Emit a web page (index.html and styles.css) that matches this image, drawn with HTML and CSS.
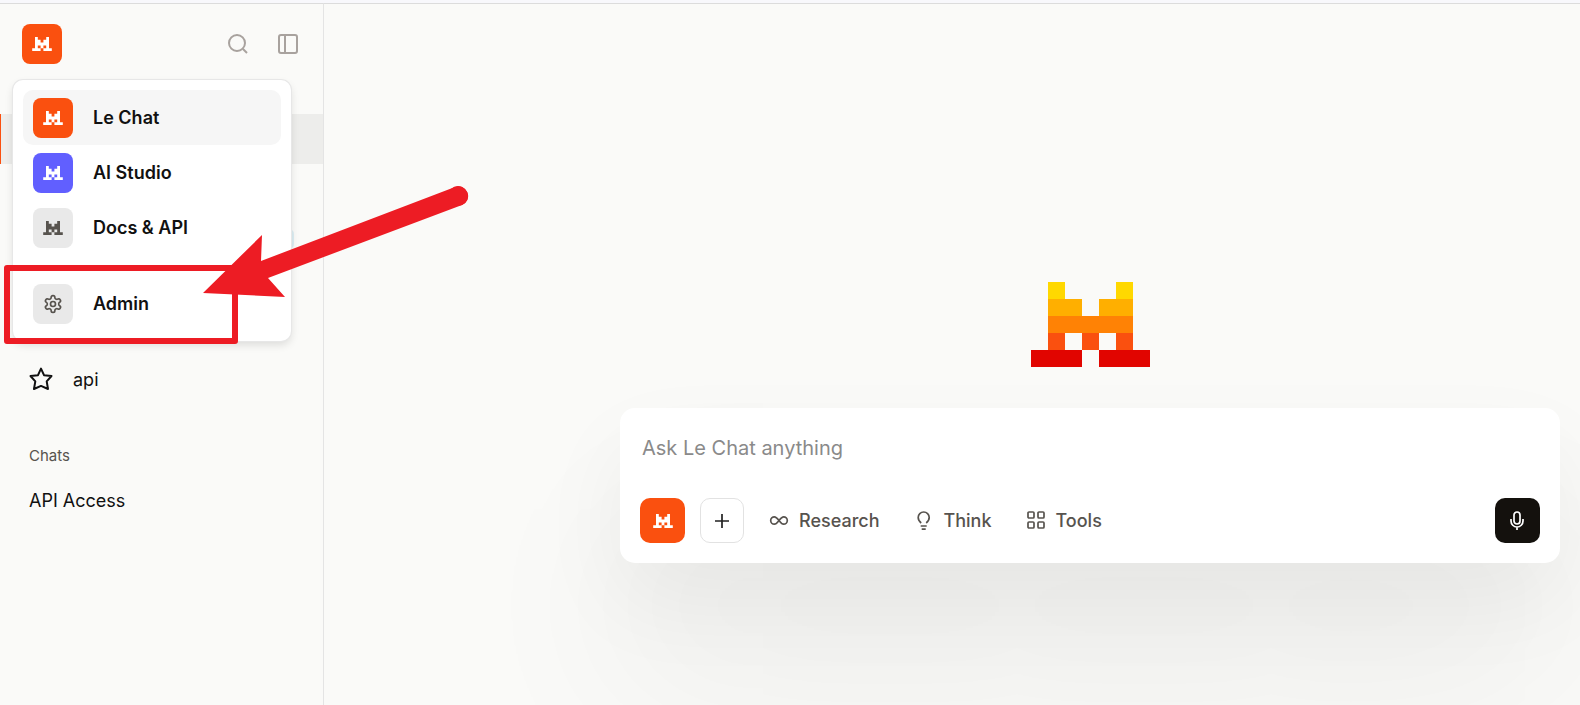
FILE: index.html
```html
<!DOCTYPE html>
<html lang="en">
<head>
  <meta charset="utf-8">
  <title>Le Chat</title>
  <link rel="stylesheet" href="styles.css">
</head>
<body>
  <!-- shared logo shape -->
  <svg class="defs" aria-hidden="true">
    <symbol id="mark" viewBox="0 0 7 5">
      <path d="M1 0h1v1h1v1h1V1h1V0h1v4h1v1H4V4H3v1H0V4h1zM2 3v1h1V3zM4 3v1h1V3z"/>
    </symbol>
  </svg>

  <div class="app">
    <aside class="sidebar">
      <header class="sidebar-top">
        <button class="tile orange" aria-label="Switch app"><svg class="mark"><use href="#mark"/></svg></button>
        <div class="top-actions">
          <button class="icon-btn" aria-label="Search">
            <svg width="20" height="20" viewBox="0 0 20 20"><circle cx="9" cy="9" r="8"/><path d="M15 15l4 4"/></svg>
          </button>
          <button class="icon-btn" aria-label="Toggle sidebar">
            <svg width="20" height="20" viewBox="0 0 20 20"><rect x="1" y="1" width="18" height="18" rx="2"/><path d="M7 1v18"/></svg>
          </button>
        </div>

        <nav class="menu" aria-label="Apps">
          <a class="menu-item active" href="#"><span class="tile orange"><svg class="mark"><use href="#mark"/></svg></span>Le Chat</a>
          <a class="menu-item" href="#"><span class="tile purple"><svg class="mark"><use href="#mark"/></svg></span>AI Studio</a>
          <a class="menu-item" href="#"><span class="tile grey"><svg class="mark"><use href="#mark"/></svg></span>Docs &amp; API</a>
          <a class="menu-item admin" href="#">
            <span class="tile grey">
              <svg class="gear" width="20" height="20" viewBox="0 0 24 24"><path d="M12.22 2h-.44a2 2 0 0 0-2 2v.18a2 2 0 0 1-1 1.73l-.43.25a2 2 0 0 1-2 0l-.15-.08a2 2 0 0 0-2.73.73l-.22.38a2 2 0 0 0 .73 2.73l.15.1a2 2 0 0 1 1 1.72v.51a2 2 0 0 1-1 1.74l-.15.09a2 2 0 0 0-.73 2.73l.22.38a2 2 0 0 0 2.73.73l.15-.08a2 2 0 0 1 2 0l.43.25a2 2 0 0 1 1 1.73V20a2 2 0 0 0 2 2h.44a2 2 0 0 0 2-2v-.18a2 2 0 0 1 1-1.73l.43-.25a2 2 0 0 1 2 0l.15.08a2 2 0 0 0 2.73-.73l.22-.39a2 2 0 0 0-.73-2.73l-.15-.08a2 2 0 0 1-1-1.74v-.5a2 2 0 0 1 1-1.74l.15-.09a2 2 0 0 0 .73-2.73l-.22-.38a2 2 0 0 0-2.73-.73l-.15.08a2 2 0 0 1-2 0l-.43-.25a2 2 0 0 1-1-1.73V4a2 2 0 0 0-2-2z"/><circle cx="12" cy="12" r="3"/></svg>
            </span>Admin
          </a>
        </nav>
      </header>

      <div class="row selected"></div>
      <div class="row badge-row"><span class="badge"></span></div>

      <a class="row starred" href="#">
        <svg width="24" height="24" viewBox="0 0 24 24"><path d="M12 1.600l3 6.600 7.500.8-4.800 5.300 1.300 7.700-7-3.100-7 3.100 1.300-7.700L1.500 9l7.500-.8z"/></svg>
        api
      </a>
      <h2 class="group-title">Chats</h2>
      <a class="row" href="#">API Access</a>
    </aside>

    <main class="main">
      <svg class="logo" width="119" height="85" viewBox="0 0 7 5" shape-rendering="crispEdges">
        <path fill="#ffd800" d="M1 0h1v1H1zM5 0h1v1H5z"/>
        <path fill="#ffaf00" d="M1 1h2v1H1zM4 1h2v1H4z"/>
        <path fill="#ff8205" d="M1 2h5v1H1z"/>
        <path fill="#fa500f" d="M1 3h1v1H1zM3 3h1v1H3zM5 3h1v1H5z"/>
        <path fill="#e10500" d="M0 4h3v1H0zM4 4h3v1H4z"/>
      </svg>

      <form class="composer">
        <input class="prompt" type="text" placeholder="Ask Le Chat anything" aria-label="Ask Le Chat anything">
        <div class="tools">
          <button type="button" class="square orange" aria-label="Agents"><svg class="mark"><use href="#mark"/></svg></button>
          <button type="button" class="square outline" aria-label="Add">
            <svg width="20" height="20" viewBox="0 0 20 20"><path d="M10 3v14M3 10h14"/></svg>
          </button>
          <button type="button" class="tool">
            <svg width="20" height="20" viewBox="0 0 20 20"><path d="M10 9.500C8.300 7.300 7.300 5.800 5.400 5.800a3.700 3.700 0 0 0 0 7.400c1.900 0 2.900-1.500 4.600-3.700s2.700-3.700 4.600-3.700a3.700 3.700 0 0 1 0 7.400c-1.900 0-2.900-1.500-4.600-3.700z"/></svg>
            Research
          </button>
          <button type="button" class="tool">
            <svg width="20" height="20" viewBox="0 0 20 20"><path d="M7.200 12C5.500 10.700 4.200 9.200 4.200 6.500a5.500 5.500 0 0 1 11 0c0 2.700-1.300 4.200-3 5.500M6.700 15h6M7.700 18.200h4"/></svg>
            Think
          </button>
          <button type="button" class="tool">
            <svg width="20" height="20" viewBox="0 0 20 20"><rect x="2" y="1" width="6" height="6" rx="1"/><rect x="12" y="1" width="6" height="6" rx="1"/><rect x="2" y="11" width="6" height="6" rx="1"/><rect x="12" y="11" width="6" height="6" rx="1"/></svg>
            Tools
          </button>
          <button type="button" class="square mic" aria-label="Voice input">
            <svg width="20" height="20" viewBox="0 0 20 20"><rect x="6" y="1" width="6" height="12" rx="3"/><path d="M3 8v2a6 6 0 0 0 12 0V8M9 16v3"/></svg>
          </button>
        </div>
      </form>
    </main>
  </div>

  <!-- annotation over the page -->
  <svg class="annotation" width="480" height="360" viewBox="0 0 480 360" aria-hidden="true">
    <rect x="7" y="268" width="228" height="73" fill="none" stroke="#ed1c24" stroke-width="6" stroke-linejoin="round"/>
    <path fill="#ed1c24" d="M203 293l59-58-1 26 194-74a9 9 0 0 1 7 18l-194 73 17 19z"/>
    <circle cx="458" cy="196" r="10" fill="#ed1c24"/>
  </svg>
</body>
</html>
```

FILE: styles.css
```css
* {
  box-sizing: border-box;
}

body {
  margin: 0;
  font-family: Inter, "Liberation Sans", sans-serif;
  font-size: 18px;
  color: #111;
  background: #fafaf8;
}

a {
  color: inherit;
  text-decoration: none;
}

button {
  padding: 0;
  border: none;
  background: none;
  font: inherit;
  cursor: pointer;
}

svg {
  display: block;
  flex: none;
}

.defs {
  position: absolute;
  width: 0;
  height: 0;
}

.app {
  display: flex;
  min-height: 100vh;
  border-top: 3px solid #f8f8fc;
  overflow: hidden;
}

/* sidebar */
.sidebar {
  width: 324px;
  flex: none;
  border-top: 1px solid #dcdcdc;
  border-right: 1px solid #e4e4e4;
}

.sidebar-top {
  position: relative;
  display: flex;
  align-items: center;
  justify-content: space-between;
  padding: 20px 25px 0 22px;
}

.top-actions {
  display: flex;
  gap: 30px;
}

.icon-btn svg {
  fill: none;
  stroke: #a8a29e;
  stroke-width: 2;
}

.tile {
  display: flex;
  align-items: center;
  justify-content: center;
  width: 40px;
  height: 40px;
  border-radius: 8px;
  color: #fff;
}

.mark {
  width: 20px;
  height: 14px;
  fill: currentColor;
}

.orange {
  background: #fa500f;
  color: #fff;
}

.purple {
  background: #615fff;
}

.grey {
  background: #e9e9e9;
  color: #57534e;
}

.gear {
  fill: none;
  stroke: currentColor;
  stroke-width: 2;
}

/* app switcher */
.menu {
  position: absolute;
  top: 76px;
  left: 13px;
  z-index: 1;
  width: 278px;
  padding: 10px;
  background: #fff;
  border-radius: 10px;
  box-shadow: 0 0 0 1px #e7e7e7, 0 4px 8px rgba(0, 0, 0, 0.12);
}

.menu-item {
  display: flex;
  align-items: center;
  gap: 20px;
  height: 55px;
  padding: 0 10px;
  border-radius: 10px;
  font-weight: 600;
}

.menu-item.active {
  background: #f6f6f6;
}

.menu-item.admin {
  margin-top: 21px;
}

/* sidebar rows */
.row {
  display: flex;
  align-items: center;
  height: 50px;
  padding: 0 29px;
}

.selected {
  margin-top: 50px;
  background: #ededeb;
  border-left: 1px solid #fa500f;
}

.badge-row {
  justify-content: flex-end;
  margin-top: 50px;
}

.badge {
  width: 40px;
  height: 20px;
  border-radius: 5px;
  background: #dceef3;
}

.starred {
  gap: 20px;
  margin-top: 90px;
}

.starred svg {
  fill: none;
  stroke: currentColor;
  stroke-width: 2;
  stroke-linejoin: round;
}

.group-title {
  margin: 42px 29px 9px;
  font-size: 15px;
  font-weight: 400;
  line-height: 20px;
  color: #57534e;
}

/* main area */
.main {
  flex: 1;
  display: flex;
  flex-direction: column;
  align-items: center;
  padding: 278px 20px 0 296px;
  border-top: 1px solid #dcdcdc;
}

.composer {
  width: 100%;
  margin-top: 41px;
  padding: 20px;
  background: #fff;
  border-radius: 15px;
  box-shadow: 0 40px 90px rgba(0, 0, 0, 0.05), 0 120px 180px rgba(0, 0, 0, 0.06);
}

.prompt {
  display: block;
  width: 100%;
  height: 40px;
  margin-bottom: 30px;
  padding: 0 2px;
  border: none;
  outline: none;
  background: none;
  font: inherit;
  font-size: 20px;
}

.prompt::placeholder {
  color: #8a8a8a;
}

.tools {
  display: flex;
  align-items: center;
}

.square {
  display: flex;
  align-items: center;
  justify-content: center;
  width: 45px;
  height: 45px;
  border-radius: 10px;
}

.outline {
  width: 44px;
  margin: 0 25px 0 15px;
  border: 1px solid #e2e2e2;
  color: #222;
}

.tools svg:not(.mark) {
  fill: none;
  stroke: currentColor;
  stroke-width: 1.7;
}

.tool {
  display: flex;
  align-items: center;
  gap: 10px;
  margin-right: 34px;
  font-weight: 500;
  color: #57534e;
}

.mic {
  margin-left: auto;
  background: #14110d;
  color: #fff;
}

.annotation {
  position: absolute;
  top: 0;
  left: 0;
  z-index: 2;
  pointer-events: none;
}
```
